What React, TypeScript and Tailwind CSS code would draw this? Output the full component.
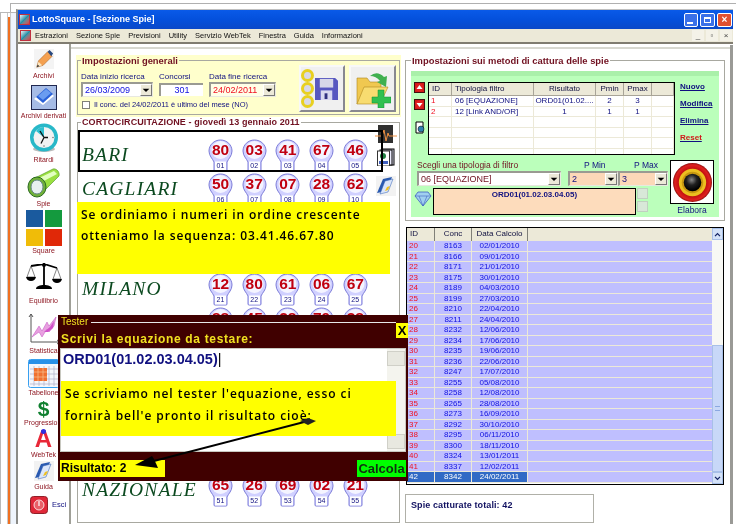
import React from "react";

const sans = "font-['Liberation_Sans',Arial,sans-serif]";

const ROWS: { name: string; balls: string[]; start: number }[] = [
  { name: "BARI", balls: ["80", "03", "41", "67", "46"], start: 1 },
  { name: "CAGLIARI", balls: ["50", "37", "07", "28", "62"], start: 6 },
  { name: "", balls: [], start: 0 },
  { name: "", balls: [], start: 0 },
  { name: "MILANO", balls: ["12", "80", "61", "06", "67"], start: 21 },
  // coperta dal tester: si vede solo la parte alta delle lampadine
  { name: "NAPOLI", balls: ["88", "45", "28", "79", "38"], start: 0 },
  { name: "", balls: [], start: 0 },
  { name: "", balls: [], start: 0 },
  { name: "", balls: [], start: 0 },
  { name: "", balls: [], start: 0 },
  { name: "NAZIONALE", balls: ["65", "26", "69", "02", "21"], start: 51 },
];

const LIST = [
  ["20", "8163", "02/01/2010"],
  ["21", "8166", "09/01/2010"],
  ["22", "8171", "21/01/2010"],
  ["23", "8175", "30/01/2010"],
  ["24", "8189", "04/03/2010"],
  ["25", "8199", "27/03/2010"],
  ["26", "8210", "22/04/2010"],
  ["27", "8211", "24/04/2010"],
  ["28", "8232", "12/06/2010"],
  ["29", "8234", "17/06/2010"],
  ["30", "8235", "19/06/2010"],
  ["31", "8236", "22/06/2010"],
  ["32", "8247", "17/07/2010"],
  ["33", "8255", "05/08/2010"],
  ["34", "8258", "12/08/2010"],
  ["35", "8265", "28/08/2010"],
  ["36", "8273", "16/09/2010"],
  ["37", "8292", "30/10/2010"],
  ["38", "8295", "06/11/2010"],
  ["39", "8300", "18/11/2010"],
  ["40", "8324", "13/01/2011"],
  ["41", "8337", "12/02/2011"],
  ["42", "8342", "24/02/2011"],
];

const Bulb = ({ value, index }: { value: string; index: number }) => (
  <div className="relative w-[25px] h-[33px] flex flex-col items-center">
    <svg viewBox="0 0 25 33" className="absolute inset-0 w-[25px] h-[33px]">
      <path
        d="M12.5 1C19 1 24 6 24 12c0 5-3.5 7.500-5 11v8q0 1-1 1H7q-1 0-1-1v-8C4.500 19.500 1 17 1 12 1 6 6 1 12.500 1Z"
        fill="#d0d0ff"
        stroke="#7c7cd8"
      />
      <circle cx="12.500" cy="11" r="9" fill="#f4f4ff" />
      <rect x="7" y="22.500" width="11" height="9" fill="#fff" />
    </svg>
    <div className="relative h-[22px] flex items-center text-[15.5px] leading-none font-bold text-[#c00010]">
      {value}
    </div>
    {index > 0 && (
      <div className="relative text-[7px] leading-[9px] text-[#101080]">
        {String(index).padStart(2, "0")}
      </div>
    )}
  </div>
);

const Arrow = () => (
  <svg viewBox="0 0 12 8" className="w-[8px] h-[6px]">
    <path d="M1 2h10L6 7Z" fill="#000" />
  </svg>
);

const SelectBox = ({
  width,
  text,
  bg,
  color,
}: {
  width: string;
  text: string;
  bg: string;
  color: string;
}) => (
  <div className={`${width} ${bg} h-[15px] flex items-center border-t-2 border-l-2 border-[#9a9a92] border-b border-r border-b-[#e8e8e0] border-r-[#e8e8e0]`}>
    <span className={`flex-1 pl-[2px] text-[9px] leading-none whitespace-nowrap overflow-hidden ${color}`}>{text}</span>
    <span className="w-[12px] h-[12px] bg-[#ece9d8] border border-[#fff] border-b-[#777] border-r-[#777] flex items-center justify-center">
      <Arrow />
    </span>
  </div>
);

const SideItem = ({
  label,
  height,
  icon,
  labelGap,
}: {
  label: string;
  height: string;
  icon: React.ReactNode;
  labelGap: string;
}) => (
  <div className={`${height} flex flex-col items-center`}>
    {icon}
    <span className={`${labelGap} text-[7px] leading-[9px] text-[#8a0f1a] whitespace-nowrap`}>{label}</span>
  </div>
);

const PencilIcon = () => (
  <svg viewBox="0 0 22 22" className="w-[20px] h-[20px]">
    <rect width="22" height="22" fill="#f4f4f4" />
    <path d="M3 20l2-7L15 3l5 5L10 18Z" fill="#f4a050" stroke="#a86020" strokeWidth=".6" />
    <path d="M15 3l2-2 4 4-2 3Z" fill="#2a4a80" />
    <path d="M3 20l2-6 4 4Z" fill="#fbe6c0" />
    <path d="M3 20l1-3 2 2Z" fill="#333" />
  </svg>
);

const BookIcon = () => (
  <svg viewBox="0 0 26 25" className="w-[26px] h-[25px]">
    <rect x=".5" y=".5" width="25" height="24" fill="#a6bce6" stroke="#202850" />
    <path d="M3 14 15 4l8 7-11 9Z" fill="#fff" />
    <path d="M5 12 15 3l7 6-10 9Z" fill="#2a62d8" />
    <path d="M7 11l8-7 5 4-8 7Z" fill="#6a9cf0" />
  </svg>
);

const ClockIcon = () => (
  <svg viewBox="0 0 30 30" className="w-[30px] h-[30px]">
    <ellipse cx="15" cy="26" rx="11" ry="3" fill="#bbb" />
    <circle cx="15" cy="14.500" r="14" fill="#28b8c8" />
    <circle cx="15" cy="14.500" r="10.500" fill="#f2f2f2" />
    <path d="M15 14.500V4a10.500 10.500 0 0 0-8 4Z" fill="#30c0d0" />
    <path d="M15 14.500 11 8M15 14.500l-3 6M15 14.500h4" stroke="#111" strokeWidth="1.300" fill="none" />
    <circle cx="24" cy="14.500" r=".8" fill="#777" />
    <circle cx="15" cy="23" r=".8" fill="#777" />
  </svg>
);

const TorchIcon = () => (
  <svg viewBox="0 0 34 30" className="w-[34px] h-[30px]">
    <path d="M8 10 26 1c4-1 7 4 6 7L16 24Z" fill="#9ae040" stroke="#4a9020" strokeWidth=".6" />
    <path d="M12 10 27 3l3 3-15 8Z" fill="#e2ffc0" />
    <ellipse cx="10" cy="19" rx="9" ry="10" fill="#70b038" stroke="#2a6a20" />
    <ellipse cx="10" cy="19" rx="6" ry="7" fill="#e8f0f0" stroke="#688" />
  </svg>
);

const ScaleIcon = () => (
  <svg viewBox="0 0 36 30" className="w-[36px] h-[30px]">
    <path d="M18 2v23M5 5l13-2 13 4" stroke="#000" strokeWidth="1.800" fill="none" />
    <path d="M10 28c0-3 4-4 8-4s8 1 8 4Z" fill="#000" />
    <circle cx="18" cy="4" r="2" fill="#000" />
    <path d="M5 5 1 16h8ZM31 7l-4 11h8Z" fill="none" stroke="#333" strokeWidth=".6" />
    <path d="M0 16h10q-1 4-5 4t-5-4ZM26 18h10q-1 4-5 4t-5-4Z" fill="#000" />
  </svg>
);

const ChartIcon = () => (
  <svg viewBox="0 0 32 33" className="w-[32px] h-[33px]">
    <path d="M3 1v28h28" stroke="#555" strokeWidth="1" fill="none" />
    <path d="M1 4 3 1l2 3M29 27l3 2-3 2" stroke="#555" fill="none" />
    <path d="M4 24 11 13l3 5 5-9 2 4 7-9-2 9-5 6-2-3-5 8-3-5Z" fill="#e8a0e0" stroke="#c050c0" strokeWidth=".5" />
    <path d="M16 19l6-5 4-6-1 7-5 4Z" fill="#d050c8" />
  </svg>
);

const CalendarIcon = () => (
  <svg viewBox="0 0 32 29" className="w-[32px] h-[29px]">
    <rect x=".5" y=".5" width="31" height="28" rx="2" fill="#f4f6fc" stroke="#38a0f0" />
    <rect x="1" y="1" width="30" height="4" fill="#2890e8" />
    <path d="M6 7v20M11 7v20M16 7v20M21 7v20M26 7v20M2 10h28M2 15h28M2 20h28M2 25h28" stroke="#b0b0c8" strokeWidth=".7" />
    <rect x="6" y="9" width="13" height="13" fill="#f07030" />
    <path d="M10 9v13M15 9v13M6 13h13M6 18h13" stroke="#f8c090" strokeWidth=".7" />
  </svg>
);

const GuideIcon = () => (
  <svg viewBox="0 0 20 20" className="w-[20px] h-[20px]">
    <rect width="20" height="20" fill="#f2f2f2" />
    <path d="M1 17 7 3l9-2-5 14Z" fill="#2a5ab0" />
    <path d="M4 18 9 5l8-2-5 13Z" fill="#dbe6fa" stroke="#2a5ab0" strokeWidth=".5" />
    <path d="M9 15l2-4 3-1-2 4Z" fill="#f0c020" />
  </svg>
);

const ExitIcon = () => (
  <svg viewBox="0 0 18 18" className="w-[18px] h-[18px]">
    <rect x=".5" y=".5" width="17" height="17" rx="3" fill="#e02838" stroke="#902028" />
    <circle cx="9" cy="9" r="5" fill="#e86068" stroke="#fff" strokeWidth=".8" />
    <path d="M9 5v5" stroke="#fff" strokeWidth="1.200" />
  </svg>
);

const ElaboraIcon = () => (
  <svg viewBox="0 0 40 40" className="w-[39px] h-[39px]">
    <defs>
      <radialGradient id="red" cx="50%" cy="50%" r="50%">
        <stop offset="70%" stopColor="#c01010" />
        <stop offset="90%" stopColor="#e02020" />
        <stop offset="100%" stopColor="#901010" />
      </radialGradient>
      <radialGradient id="ball" cx="45%" cy="35%" r="60%">
        <stop offset="0%" stopColor="#888" />
        <stop offset="50%" stopColor="#202020" />
        <stop offset="100%" stopColor="#000" />
      </radialGradient>
    </defs>
    <circle cx="20" cy="20" r="20" fill="url(#red)" />
    <circle cx="20" cy="20" r="14" fill="#ecc020" />
    <circle cx="20" cy="20" r="11" fill="#c89810" />
    <circle cx="20" cy="20" r="9" fill="url(#ball)" />
  </svg>
);

const Sidebar = () => (
  <div className="w-[51px] shrink-0 bg-white pt-[5px] flex flex-col">
    <SideItem height="h-[36px]" label="Archivi" labelGap="mt-[2px]" icon={<PencilIcon />} />
    <SideItem height="h-[38px]" label="Archivi derivati" labelGap="mt-[1px]" icon={<BookIcon />} />
    <SideItem height="h-[45px]" label="Ritardi" labelGap="mt-[2px]" icon={<ClockIcon />} />
    <SideItem height="h-[42px]" label="Spie" labelGap="mt-[1px]" icon={<TorchIcon />} />
    <SideItem
      height="h-[51px]"
      label="Square"
      labelGap="mt-[0px]"
      icon={
        <div className="grid grid-cols-[17px_17px] gap-[2px]">
          <div className="h-[17px] bg-[#1a5a9e]" />
          <div className="h-[17px] bg-[#149a3e]" />
          <div className="h-[17px] bg-[#f0bc08]" />
          <div className="h-[17px] bg-[#e02808]" />
        </div>
      }
    />
    <SideItem height="h-[52px]" label="Equilibrio" labelGap="mt-[5px]" icon={<ScaleIcon />} />
    <SideItem height="h-[46px]" label="Statistica" labelGap="mt-[0px]" icon={<ChartIcon />} />
    <SideItem height="h-[40px]" label="Tabellone" labelGap="mt-[0px]" icon={<CalendarIcon />} />
    <SideItem
      height="h-[30px]"
      label="Progressioni"
      labelGap="mt-[0px]"
      icon={<div className="h-[19px] text-[21px] leading-[19px] font-bold text-[#108030]">$</div>}
    />
    <SideItem
      height="h-[32px]"
      label="WebTek"
      labelGap="mt-[1px]"
      icon={
        <div className="relative h-[20px] text-[24px] leading-[20px] font-bold text-[#e82838]">
          A
          <span className="absolute left-[6px] top-[0px] w-[5px] h-[5px] rounded-full bg-[#3030e0]" />
        </div>
      }
    />
    <SideItem height="h-[35px]" label="Guida" labelGap="mt-[1px]" icon={<GuideIcon />} />
    <div className="flex items-center pl-[12px] gap-[4px]">
      <ExitIcon />
      <span className="text-[7.5px] text-[#101080]">Esci</span>
    </div>
  </div>
);

const GeneralSettings = () => (
  <div className="h-[62px] bg-[#ffffcc] px-[1px]">
    <fieldset className="mt-[1px] h-[60px] border border-[#a8a8a0] pl-[3px]">
      <legend className="px-[1px] text-[9.4px] leading-[11px] font-bold text-[#701020]">
        Impostazioni generali
      </legend>
      <div className="flex">
        <div className="w-[216px] pt-[5px]">
          <div className="flex gap-[6px]">
            <div>
              <div className="text-[8px] leading-[11px] text-[#101080]">Data inizio ricerca</div>
              <SelectBox width="w-[72px]" text="26/03/2009" bg="bg-white" color="text-[#1010e0]" />
            </div>
            <div className="w-[44px]">
              <div className="text-[8px] leading-[11px] text-[#101080]">Concorsi</div>
              <div className="h-[13px] mt-[1px] bg-white border-t-2 border-l-2 border-[#9a9a92] text-center text-[9px] leading-[10px] text-[#1010e0]">301</div>
            </div>
            <div>
              <div className="text-[8px] leading-[11px] text-[#101080]">Data fine ricerca</div>
              <SelectBox width="w-[67px]" text="24/02/2011" bg="bg-[#ffffe8]" color="text-[#f01020]" />
            </div>
          </div>
          <div className="flex items-center gap-[4px] mt-[3px] pl-[1px]">
            <span className="w-[8px] h-[8px] bg-white border border-[#808078]" />
            <span className="text-[7.5px] leading-[9px] text-[#101080] whitespace-nowrap">
              Il conc. del 24/02/2011 è ultimo del mese (NO)
            </span>
          </div>
        </div>
        <div className="flex gap-[4px] -mt-[1px] ml-[2px]">
          <div className="w-[46px] h-[47px] bg-[#f0f0f0] border-2 border-[#888890] border-t-[#f8f8f8] border-l-[#f8f8f8] flex items-center gap-[1px]">
            <div className="flex flex-col">
              <span className="w-[13px] h-[13px] rounded-full border-[3px] border-[#e8d020] bg-[#d8d8e8]" />
              <span className="w-[13px] h-[13px] rounded-full border-[3px] border-[#e8d020] bg-[#d8d8e8]" />
              <span className="w-[13px] h-[13px] rounded-full border-[3px] border-[#e8d020] bg-[#d8d8e8]" />
            </div>
            <svg viewBox="0 0 24 24" className="w-[23px] h-[23px]">
              <path d="M0 1h21l3 3v20H0Z" fill="#5858c0" />
              <rect x="5" y="2" width="14" height="9" fill="#d8d8e8" />
              <rect x="6" y="14" width="12" height="10" fill="#d8d8f0" />
              <rect x="10" y="17" width="3" height="6" fill="#303080" />
            </svg>
          </div>
          <div className="w-[47px] h-[47px] bg-[#f0f0f0] border-2 border-[#888890] border-t-[#f8f8f8] border-l-[#f8f8f8] flex items-center justify-center">
            <svg viewBox="0 0 36 38" className="w-[36px] h-[38px]">
              <path d="M2 8h10l3 4h11v8H12L2 34Z" fill="#f0c850" stroke="#b08820" strokeWidth=".6" />
              <path d="M2 34 9 17h24l-8 17Z" fill="#f8dc70" stroke="#b08820" strokeWidth=".6" />
              <path d="M15 6q7-6 14 1l3-1-1 11-9-5 3-1q-4-5-10-5Z" fill="#40b050" />
              <path d="M23 20h6v7h7v6h-7v5h-6v-5h-6v-6h6Z" fill="#30c050" stroke="#109030" strokeWidth=".5" />
            </svg>
          </div>
        </div>
      </div>
    </fieldset>
  </div>
);

const DrawPanel = () => (
  <fieldset className="mx-[1px] h-[406px] border border-[#a8a8a0] bg-white">
    <legend className="ml-[3px] px-[1px] text-[9px] leading-[11px] font-bold tracking-[0.1px] text-[#701020]">
      CORTOCIRCUITAZIONE - giovedì 13 gennaio 2011
    </legend>
    <div className="flex">
      <div className="w-[296px] pt-[11px] pl-[4px]">
        {ROWS.map((row, i) => (
          <div key={i} className="h-[33.5px] flex items-start">
            <div className="w-[126px] h-[32px] flex items-center font-['Liberation_Serif',serif] italic text-[19.5px] tracking-[1.2px] text-[#0c4a20] whitespace-nowrap">
              {row.name}
            </div>
            <div className="flex gap-[8.7px]">
              {row.balls.map((b, k) => (
                <Bulb key={k} value={b} index={row.start > 0 ? row.start + k : 0} />
              ))}
            </div>
          </div>
        ))}
      </div>
      <div className="flex flex-col items-center gap-[5px] -mt-[3px] ml-[1px]">
        <svg viewBox="0 0 22 18" className="w-[22px] h-[18px]">
          <rect x="3" width="15" height="18" fill="#303030" />
          <path d="M0 11h7l2-6 2 11 2-8 1 3h8" stroke="#f09040" strokeWidth="1" fill="none" />
        </svg>
        <svg viewBox="0 0 18 18" className="w-[18px] h-[18px]">
          <rect x="5" y="1" width="12" height="16" fill="#dde" stroke="#000" />
          <rect x="3" y="2" width="12" height="15" fill="#eef" stroke="#000" />
          <rect x=".5" y="3" width="12" height="15" fill="#fff" stroke="#333" />
          <circle cx="6" cy="8" r="3" fill="#208040" />
          <rect x="2" y="13" width="9" height="3" fill="#4060c0" />
        </svg>
        <div className="mt-[5px]">
          <GuideIcon />
        </div>
      </div>
    </div>
  </fieldset>
);

const FilterTable = () => {
  const cols = "grid grid-cols-[23px_82px_62px_28px_28px_1fr]";
  const head = ["ID", "Tipologia filtro", "Risultato", "Pmin", "Pmax", ""];
  const rows = [
    ["1", "06 [EQUAZIONE]", "ORD01(01.02....", "2", "3", ""],
    ["2", "12 [Link AND/OR]", "1", "1", "1", ""],
    ["", "", "", "", "", ""],
    ["", "", "", "", "", ""],
    ["", "", "", "", "", ""],
    ["", "", "", "", "", ""],
  ];
  return (
    <div className="w-[247px] h-[73px] border border-black bg-white overflow-hidden">
      <div className={`${cols} h-[13px] bg-[#ece9d8]`}>
        {head.map((h, i) => (
          <div
            key={i}
            className={`border-r border-b border-[#a8a498] border-l-white text-[8px] leading-[12px] text-[#101040] ${i < 2 ? "pl-[3px]" : "text-center"}`}
          >
            {h}
          </div>
        ))}
      </div>
      {rows.map((r, i) => (
        <div key={i} className={`${cols} h-[10.500px] border-b border-[#ece9d8]`}>
          {r.map((c, k) => (
            <div
              key={k}
              className={`border-r border-[#ece9d8] text-[8px] leading-[10px] whitespace-nowrap overflow-hidden ${k === 0 ? "pl-[2px] text-[#f01020]" : "text-[#101080]"} ${k === 1 ? "pl-[3px]" : ""} ${k > 1 ? "text-center" : ""}`}
            >
              {c}
            </div>
          ))}
        </div>
      ))}
    </div>
  );
};

const RedArrow = ({ up }: { up: boolean }) => (
  <svg viewBox="0 0 11 11" className="w-[11px] h-[11px]">
    <rect x=".5" y=".5" width="10" height="10" fill="#d01818" stroke="#401010" />
    <circle cx="5.500" cy="5.500" r="4" fill="#e02020" />
    <path d={up ? "M2.500 7h6L5.500 3Z" : "M2.500 4h6L5.500 8Z"} fill="#fff" />
  </svg>
);

const MethodsPanel = () => (
  <fieldset className="h-[166px] border border-[#a8a8a0] px-[5px]">
    <legend className="px-[1px] text-[9.4px] leading-[11px] font-bold text-[#701020]">
      Impostazioni sui metodi di cattura delle spie
    </legend>
    <div className="mt-[5px] h-[146px] w-[308px] bg-[#bbffbb]">
      <div className="h-[5px] bg-[#aaf0aa]" />
      <div className="flex mt-[6px] pl-[3px]">
        <div className="w-[14px] flex flex-col items-start">
          <RedArrow up />
          <div className="mt-[6px]">
            <RedArrow up={false} />
          </div>
          <svg viewBox="0 0 12 13" className="w-[12px] h-[13px] mt-[11px]">
            <path d="M2 1h7v11H2Z" fill="#fff" stroke="#000" />
            <circle cx="7" cy="8" r="3" fill="#3080b0" stroke="#000" strokeWidth=".5" />
          </svg>
        </div>
        <FilterTable />
        <div className="ml-[5px] flex flex-col gap-[7px] text-[8px] leading-[10px] font-bold underline text-[#101080]">
          <span>Nuovo</span>
          <span>Modifica</span>
          <span>Elimina</span>
          <span className="text-[#d01818]">Reset</span>
        </div>
      </div>
      <div className="flex mt-[5px] pl-[3px]">
        <div className="w-[254px]">
          <div className="flex h-[11px] items-center pl-[3px] text-[8.500px] leading-[11px]">
            <span className="w-[167px] text-[#701020]">Scegli una tipologia di filtro</span>
            <span className="w-[50px] text-[#101080]">P Min</span>
            <span className="text-[#101080]">P Max</span>
          </div>
          <div className="flex pl-[3px]">
            <SelectBox width="w-[144px]" text="06 [EQUAZIONE]" bg="bg-white" color="text-[#701020]" />
            <div className="ml-[7px]">
              <SelectBox width="w-[50px]" text="2" bg="bg-[#fcd8b8]" color="text-[#101080]" />
            </div>
            <SelectBox width="w-[50px]" text="3" bg="bg-[#fcd8b8]" color="text-[#101080]" />
          </div>
          <div className="flex mt-[2px]">
            <svg viewBox="0 0 18 16" className="w-[18px] h-[16px] mt-[3px] shrink-0">
              <path d="M4 1h10l3 4-8 10L1 5Z" fill="#a0d0f0" stroke="#4060c0" strokeWidth=".8" />
              <path d="M1 5h16M5 5l4 10 4-10" stroke="#4060c0" strokeWidth=".6" fill="none" />
            </svg>
            <div className="ml-[1px] w-[203px] h-[27px] shrink-0 bg-[#fddcbc] border border-black text-center text-[8px] leading-[11px] font-bold text-[#101080]">
              ORD01(01.02.03.04.05)
            </div>
            <div className="ml-[1px] flex flex-col gap-[2px]">
              <span className="w-[11px] h-[11px] bg-[#d8e8d8] border border-[#c0d0c0]" />
              <span className="w-[11px] h-[11px] bg-[#d8e8d8] border border-[#c0d0c0]" />
            </div>
          </div>
        </div>
        <div className="ml-[2px] flex flex-col items-center">
          <div className="w-[44px] h-[44px] bg-white border border-black flex items-center justify-center">
            <ElaboraIcon />
          </div>
          <span className="mt-[1px] text-[8.500px] leading-[10px] text-[#101080]">Elabora</span>
        </div>
      </div>
    </div>
  </fieldset>
);

const CatchList = () => (
  <div className="mt-[6px] ml-[1px] w-[318px] h-[258px] border border-black flex bg-white">
    <div className="flex-1">
      <div className="grid grid-cols-[28px_37px_56px_1fr] h-[13px] bg-[#ece9d8] text-[8px] leading-[12px] text-[#101040]">
        <div className="pl-[3px] border-r border-[#808078]">ID</div>
        <div className="text-center border-r border-[#808078]">Conc</div>
        <div className="text-center border-r border-[#808078]">Data Calcolo</div>
        <div />
      </div>
      {LIST.map((r) => {
        const sel = r[0] === "42";
        return (
          <div key={r[0]} className="grid grid-cols-[28px_37px_56px_1fr] h-[10.500px] bg-[#bfbfff] border-b border-[#ece9d8] text-[8px] leading-[10px]">
            <div className={`pl-[2px] border-r border-[#ece9d8] ${sel ? "bg-[#316ac5] text-white" : "text-[#f01020]"}`}>{r[0]}</div>
            <div className={`text-center border-r border-[#ece9d8] ${sel ? "bg-[#316ac5] text-white" : "text-[#1010e0]"}`}>{r[1]}</div>
            <div className={`text-center border-r border-[#ece9d8] ${sel ? "bg-[#316ac5] text-white" : "text-[#1010e0]"}`}>{r[2]}</div>
            <div />
          </div>
        );
      })}
    </div>
    <div className="w-[11px] flex flex-col bg-[#f8f8f4]">
      <div className="h-[12px] bg-[#d4e2f8] border border-[#a8c0e8] flex items-center justify-center">
        <svg viewBox="0 0 8 6" className="w-[7px] h-[5px]"><path d="M1 5l3-3 3 3" stroke="#102060" strokeWidth="1.500" fill="none" /></svg>
      </div>
      <div className="h-[105px]" />
      <div className="flex-1 bg-[#c8d8f8] border border-[#a8c0e8] flex items-center justify-center">
        <div className="w-[5px] h-[5px] border-y border-[#8aa8e0]" />
      </div>
      <div className="h-[12px] bg-[#d4e2f8] border border-[#a8c0e8] flex items-center justify-center">
        <svg viewBox="0 0 8 6" className="w-[7px] h-[5px]"><path d="M1 1l3 3 3-3" stroke="#102060" strokeWidth="1.500" fill="none" /></svg>
      </div>
    </div>
  </div>
);

const Tester = () => (
  <div className="absolute left-[58px] top-[315px] w-[350px] h-[166px] bg-[#400000]">
    <div className="flex items-center h-[14px] pl-[3px] pr-[12px]">
      <span className="text-[10px] leading-[14px] text-[#f0e020]">Tester</span>
      <span className="ml-[3px] flex-1 h-[1px] bg-[#e8e8e8]" />
    </div>
    <span className="absolute right-0 top-[8px] w-[12px] h-[15px] bg-[#ffff00] text-center text-[13px] leading-[15px] font-bold text-black">
      X
    </span>
    <div className="mt-[3px] pl-[3px] h-[15px] text-[12px] leading-[15px] font-bold tracking-[0.65px] text-[#f0e020] whitespace-nowrap">
      Scrivi la equazione da testare:
    </div>
    <div className="relative mt-[1px] mx-[2px] h-[104px] bg-white border border-[#c8c8c0] flex">
      <div className="flex-1 pl-[2px] pt-[1px] h-[20px] text-[14.5px] leading-[18px] font-bold text-[#101080] whitespace-nowrap">
        ORD01(01.02.03.04.05)<span className="font-normal text-black">|</span>
      </div>
      <div className="w-[18px] flex flex-col justify-between py-[2px] bg-[#f4f4ee]">
        <span className="h-[15px] bg-[#e8e8e0] border border-[#d0d0c8]" />
        <span className="h-[15px] bg-[#e8e8e0] border border-[#d0d0c8]" />
      </div>
      <div className="absolute left-0 top-[32px] w-[335px] h-[55px] bg-[#ffff00] pl-[4px] pt-[2px] font-['Open_Sans',sans-serif] font-semibold text-[12px] leading-[22px] tracking-[0.95px] text-black whitespace-nowrap">
        <div>Se scriviamo nel tester l'equazione, esso ci</div>
        <div>fornirà bell'e pronto il risultato cioè:</div>
      </div>
    </div>
    <div className="flex justify-between mt-[8px] mx-[2px] h-[17px]">
      <div className="w-[105px] bg-[#ffff00] pl-[1px] text-[12px] leading-[17px] font-bold text-black">Risultato: 2</div>
      <div className="w-[49px] bg-[#00ff00] text-center text-[13px] leading-[17px] font-bold text-[#103010]">Calcola</div>
    </div>
  </div>
);

export default function App() {
  return (
    <div className={`relative w-[736px] h-[524px] overflow-hidden bg-white flex blur-[0.3px] ${sans}`}>
      {/* finestre dietro */}
      <div className="w-[16px] shrink-0 flex flex-col">
        <div className="h-[12px] flex justify-end">
          <div className="w-[6px] mt-[3px] border-l border-t border-[#b0b0b0]" />
        </div>
        <div className="flex-1 flex border-t border-[#b8b8b8]">
          <div className="w-[1px] bg-[#b8b8b8]" />
          <div className="w-[6px]" />
          <div className="w-[1px] bg-[#c8c8c8]" />
          <div className="w-[2px] bg-[#f07020] mt-[4px]" />
          <div className="w-[1px] bg-[#c8c8c8]" />
          <div className="w-[5px] bg-[#eef4fc]" />
        </div>
      </div>

      <div className="w-[720px] shrink-0 flex flex-col">
        <div className="h-[9px]">
          <div className="mt-[3px] h-[1px] bg-[#b0b0b0]" />
        </div>
        <div className="flex-1 flex flex-col min-h-0 border-l-2 border-[#8a8a86] border-t border-t-[#c0c0c0] w-[717px]">
          <div className="h-[19px] bg-gradient-to-b from-[#0a5ae8] via-[#0450dc] to-[#0a48c8] flex items-center pl-[1px] pr-[1px] shrink-0">
            <div className="w-[11px] h-[11px] bg-gradient-to-br from-[#e8f4f8] via-[#2090a8] to-[#d83040] border border-[#c03040]" />
            <span className="ml-[2px] text-[9px] font-bold text-white whitespace-nowrap">
              LottoSquare - [Sezione Spie]
            </span>
            <div className="ml-auto flex gap-[2px]">
              <span className="w-[14px] h-[14px] rounded-[2px] border border-white bg-[#3a70e8] flex items-end pl-[2px] pb-[2px]">
                <span className="w-[6px] h-[2px] bg-white" />
              </span>
              <span className="w-[15px] h-[14px] rounded-[2px] border border-white bg-[#3a70e8] flex items-center justify-center">
                <span className="w-[7px] h-[6px] border border-white border-t-2" />
              </span>
              <span className="w-[15px] h-[14px] rounded-[2px] border border-white bg-[#e05030] flex items-center justify-center text-[10px] leading-none font-bold text-white">
                ×
              </span>
            </div>
          </div>
          <div className="h-[15px] shrink-0 bg-[#ece9d8] border-b-2 border-[#807c70] flex items-center pl-[2px] pr-[1px] text-[7.5px] text-[#101010]">
            <div className="w-[11px] h-[11px] bg-gradient-to-br from-[#e8f4f8] via-[#2090a8] to-[#d83040] border border-[#c03040]" />
            <div className="ml-[4px] flex gap-[8px] whitespace-nowrap">
              <span>Estrazioni</span>
              <span>Sezione Spie</span>
              <span>Previsioni</span>
              <span>Utility</span>
              <span>Servizio WebTek</span>
              <span>Finestra</span>
              <span>Guida</span>
              <span>Informazioni</span>
            </div>
            <div className="ml-auto flex gap-[2px] text-[#404040]">
              <span className="w-[12px] h-[11px] bg-[#f4f2e8] text-center text-[8px] leading-[12px]">_</span>
              <span className="w-[12px] h-[11px] bg-[#f4f2e8] text-center text-[8px] leading-[11px]">▫</span>
              <span className="w-[12px] h-[11px] bg-[#f4f2e8] text-center text-[8px] leading-[11px]">×</span>
            </div>
          </div>

          <div className="flex-1 min-h-0 flex">
            <Sidebar />
            <div className="flex-1 min-w-0 border-l-2 border-[#a0a098] flex flex-col bg-white">
              <div className="h-[5px] shrink-0 border-b-2 border-[#d8d8d0]" />
              <div className="flex pt-[5px] pl-[5px]">
                <div className="w-[325px]">
                  <GeneralSettings />
                  <DrawPanel />
                </div>
                <div className="ml-[4px] w-[318px] pt-[1px]">
                  <MethodsPanel />
                  <CatchList />
                  <div className="mt-[9px] w-[189px] h-[29px] border border-[#b0b0a8] pl-[5px] pt-[5px] text-[9px] leading-[11px] font-bold tracking-[0.1px] text-[#101060]">
                    Spie catturate totali: 42
                  </div>
                </div>
              </div>
            </div>
          </div>
        </div>
      </div>
      <div className="absolute left-[730px] top-[45px] bottom-0 w-[3px] bg-[#9a9a96]" />

      <div className="absolute left-[78px] top-[130px] w-[305px] h-[42px] border-2 border-black pointer-events-none" />
      <div className="absolute left-[77px] top-[202px] w-[313px] h-[72px] bg-[#ffff00] pl-[4px] pt-[2px] font-['Open_Sans',sans-serif] font-semibold text-[12px] leading-[21px] tracking-[0.9px] text-black whitespace-nowrap">
        <div>Se ordiniamo i numeri in ordine crescente</div>
        <div>otteniamo la sequenza: 03.41.46.67.80</div>
      </div>

      <Tester />

      <svg className="absolute left-[130px] top-[412px] w-[190px] h-[62px]" viewBox="0 0 190 62">
        <path d="M178 9 20 50" stroke="#000" strokeWidth="2" />
        <path d="M5 53 22 44l2 3 4 9Z" fill="#000" />
        <path d="M170 9l8-3 8 3-8 4Z" fill="#222" />
      </svg>
    </div>
  );
}
